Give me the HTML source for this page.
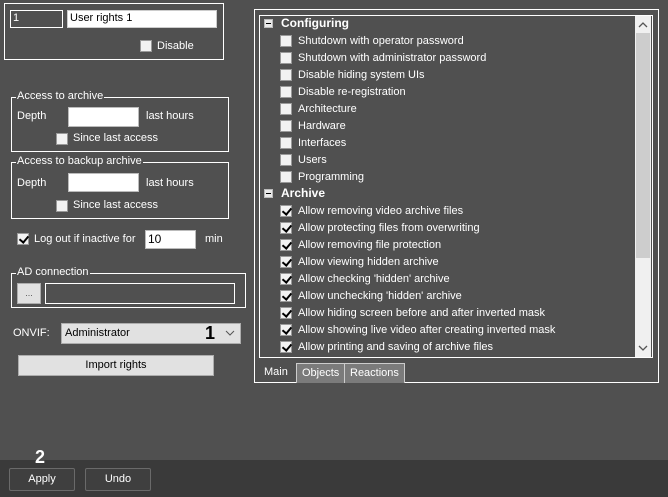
<!DOCTYPE html>
<html><head><meta charset="utf-8"><style>
*{box-sizing:border-box;margin:0;padding:0}
body{width:668px;height:497px;background:#505050;font-family:"Liberation Sans",Arial,sans-serif;font-size:11px;color:#fff;position:relative;overflow:hidden}
.a{position:absolute}
.box{position:absolute;border:1px solid #fff}
.lg{position:absolute;background:#505050;padding:0 1px;line-height:12px;white-space:nowrap}
.t{position:absolute;white-space:nowrap;line-height:13px}
.inp{position:absolute;background:#fff;border:1px solid #bbb}
.cb{position:absolute;width:12px;height:12px;background:#f2f2f2;border:1px solid #999}
.cb.on::after{content:"";position:absolute;left:3px;top:0px;width:4px;height:7px;border:solid #000;border-width:0 2px 2px 0;transform:rotate(40deg)}
.exp{position:absolute;width:9px;height:9px;border:1px solid #bbb;background:#e8e8e8}
.exp::after{content:"";position:absolute;left:1px;top:3px;width:5px;height:1px;background:#000}
.btn{position:absolute;background:#e1e1e1;border:1px solid #adadad;color:#000;text-align:center}
</style></head><body>

<div class="box" style="left:4px;top:3px;width:220px;height:57px"></div>
<div class="box" style="left:10px;top:10px;width:53px;height:18px;background:#505050"></div>
<div class="t" style="left:13px;top:12px">1</div>
<div class="inp" style="left:67px;top:10px;width:150px;height:18px;border-color:#ccc"></div>
<div class="t" style="left:70px;top:12px;color:#000">User rights 1</div>
<div class="cb" style="left:140px;top:40px"></div>
<div class="t" style="left:157px;top:40px">Disable</div>

<div class="box" style="left:11px;top:97px;width:218px;height:55px"></div>
<div class="lg" style="left:16px;top:90px">Access to archive</div>
<div class="t" style="left:17px;top:110px">Depth</div>
<div class="inp" style="left:68px;top:107px;width:71px;height:20px"></div>
<div class="t" style="left:146px;top:110px">last hours</div>
<div class="cb" style="left:56px;top:133px"></div>
<div class="t" style="left:73px;top:132px">Since last access</div>

<div class="box" style="left:11px;top:162px;width:218px;height:57px"></div>
<div class="lg" style="left:16px;top:155px">Access to backup archive</div>
<div class="t" style="left:17px;top:177px">Depth</div>
<div class="inp" style="left:68px;top:173px;width:71px;height:19px"></div>
<div class="t" style="left:146px;top:177px">last hours</div>
<div class="cb" style="left:56px;top:200px"></div>
<div class="t" style="left:73px;top:199px">Since last access</div>

<div class="cb on" style="left:17px;top:233px"></div>
<div class="t" style="left:34px;top:233px">Log out if inactive for</div>
<div class="inp" style="left:145px;top:230px;width:51px;height:19px"></div>
<div class="t" style="left:148px;top:233px;color:#000;font-size:12px">10</div>
<div class="t" style="left:205px;top:233px">min</div>

<div class="box" style="left:11px;top:273px;width:235px;height:35px"></div>
<div class="lg" style="left:16px;top:266px">AD connection</div>
<div class="btn" style="left:17px;top:283px;width:24px;height:21px;line-height:18px;font-size:9px;color:#555">...</div>
<div class="box" style="left:45px;top:283px;width:190px;height:21px"></div>

<div class="t" style="left:13px;top:327px">ONVIF:</div>
<div class="btn" style="left:61px;top:323px;width:180px;height:21px;text-align:left"></div>
<div class="t" style="left:65px;top:327px;color:#000">Administrator</div>
<div class="t" style="left:205px;top:323px;color:#000;font-weight:bold;font-size:18px;line-height:20px">1</div>
<svg class="a" style="left:225px;top:329px" width="10" height="8"><path d="M1 2 L5 6 L9 2" stroke="#555" fill="none" stroke-width="1"/></svg>
<div class="btn" style="left:18px;top:355px;width:196px;height:21px;line-height:19px">Import rights</div>

<div class="box" style="left:254px;top:9px;width:405px;height:374px"></div>
<div class="box" style="left:259px;top:15px;width:394px;height:343px"></div>
<div class="a" style="left:635px;top:16px;width:16px;height:341px;background:#f0f0f0"></div>
<div class="a" style="left:636px;top:33px;width:14px;height:225px;background:#cdcdcd"></div>
<svg class="a" style="left:638px;top:21px" width="10" height="8"><path d="M1 6 L5 2 L9 6" stroke="#555" fill="none" stroke-width="1.3"/></svg>
<svg class="a" style="left:638px;top:344px" width="10" height="8"><path d="M1 2 L5 6 L9 2" stroke="#555" fill="none" stroke-width="1.3"/></svg>

<div class="exp" style="left:264px;top:19px"></div>
<div class="t" style="left:281px;top:17px;font-weight:bold;font-size:12px">Configuring</div>
<div class="cb" style="left:280px;top:35px"></div><div class="t" style="left:298px;top:35px">Shutdown with operator password</div>
<div class="cb" style="left:280px;top:52px"></div><div class="t" style="left:298px;top:52px">Shutdown with administrator password</div>
<div class="cb" style="left:280px;top:69px"></div><div class="t" style="left:298px;top:69px">Disable hiding system UIs</div>
<div class="cb" style="left:280px;top:86px"></div><div class="t" style="left:298px;top:86px">Disable re-registration</div>
<div class="cb" style="left:280px;top:103px"></div><div class="t" style="left:298px;top:103px">Architecture</div>
<div class="cb" style="left:280px;top:120px"></div><div class="t" style="left:298px;top:120px">Hardware</div>
<div class="cb" style="left:280px;top:137px"></div><div class="t" style="left:298px;top:137px">Interfaces</div>
<div class="cb" style="left:280px;top:154px"></div><div class="t" style="left:298px;top:154px">Users</div>
<div class="cb" style="left:280px;top:171px"></div><div class="t" style="left:298px;top:171px">Programming</div>
<div class="exp" style="left:264px;top:189px"></div>
<div class="t" style="left:281px;top:187px;font-weight:bold;font-size:12px">Archive</div>
<div class="cb on" style="left:280px;top:205px"></div><div class="t" style="left:298px;top:205px">Allow removing video archive files</div>
<div class="cb on" style="left:280px;top:222px"></div><div class="t" style="left:298px;top:222px">Allow protecting files from overwriting</div>
<div class="cb on" style="left:280px;top:239px"></div><div class="t" style="left:298px;top:239px">Allow removing file protection</div>
<div class="cb on" style="left:280px;top:256px"></div><div class="t" style="left:298px;top:256px">Allow viewing hidden archive</div>
<div class="cb on" style="left:280px;top:273px"></div><div class="t" style="left:298px;top:273px">Allow checking 'hidden' archive</div>
<div class="cb on" style="left:280px;top:290px"></div><div class="t" style="left:298px;top:290px">Allow unchecking 'hidden' archive</div>
<div class="cb on" style="left:280px;top:307px"></div><div class="t" style="left:298px;top:307px">Allow hiding screen before and after inverted mask</div>
<div class="cb on" style="left:280px;top:324px"></div><div class="t" style="left:298px;top:324px">Allow showing live video after creating inverted mask</div>
<div class="cb on" style="left:280px;top:341px"></div><div class="t" style="left:298px;top:341px">Allow printing and saving of archive files</div>

<div class="t" style="left:264px;top:366px">Main</div>
<div class="a" style="left:296px;top:363px;width:49px;height:20px;background:#7b7b7b;border:1px solid #ccc;border-bottom:none"></div>
<div class="t" style="left:302px;top:367px">Objects</div>
<div class="a" style="left:344px;top:363px;width:61px;height:20px;background:#7b7b7b;border:1px solid #ccc;border-bottom:none"></div>
<div class="t" style="left:350px;top:367px">Reactions</div>

<div class="a" style="left:0;top:460px;width:668px;height:37px;background:#3a3a3a"></div>
<div class="t" style="left:35px;top:448px;font-weight:bold;font-size:18px;line-height:19px">2</div>
<div class="a" style="left:9px;top:468px;width:66px;height:23px;border:1px solid #6a6a6a;background:#3f3f3f;border-radius:2px;text-align:center;line-height:21px">Apply</div>
<div class="a" style="left:85px;top:468px;width:66px;height:23px;border:1px solid #6a6a6a;background:#3f3f3f;border-radius:2px;text-align:center;line-height:21px">Undo</div>
</body></html>
